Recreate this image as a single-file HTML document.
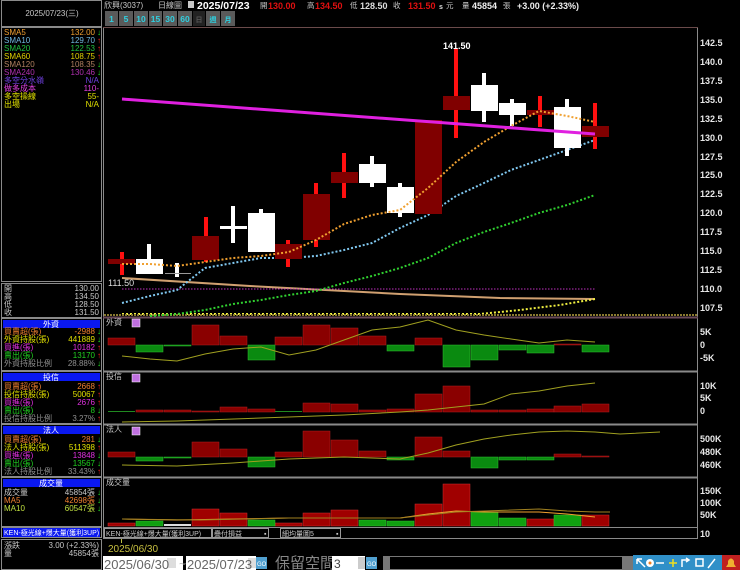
<!DOCTYPE html>
<html><head><meta charset="utf-8"><style>
html,body{margin:0;padding:0;background:#000;width:740px;height:570px;overflow:hidden}
svg{display:block}
text{font-family:"Liberation Sans","Noto Sans CJK TC",sans-serif}
.s{font-size:8px}
.ax{font-size:9px;fill:#e8e8e8;font-weight:bold}
</style></head><body>
<svg width="740" height="570" viewBox="0 0 740 570" xmlns="http://www.w3.org/2000/svg">
<rect width="740" height="570" fill="#000"/>
<!-- left panel frames -->
<g fill="none" stroke="#8a8a8a" stroke-width="1">
<rect x="1.5" y="0.5" width="100" height="26"/>
<rect x="1.5" y="27.5" width="100" height="254"/>
<rect x="1.5" y="283.5" width="100" height="34"/>
<rect x="1.5" y="318.5" width="100" height="52"/>
<rect x="1.5" y="371.5" width="100" height="52"/>
<rect x="1.5" y="424.5" width="100" height="52"/>
<rect x="1.5" y="477.5" width="100" height="49"/>
<rect x="1.5" y="527.5" width="100" height="10"/>
<rect x="1.5" y="539.5" width="100" height="30"/>
</g>
<text x="52" y="16" class="s" fill="#c8c8c8" text-anchor="middle">2025/07/23(三)</text>
<!-- SMA list -->
<g class="s">
<text x="4" y="35" fill="#f0a030">SMA5</text><text x="95" y="35" fill="#f0a030" text-anchor="end">132.00</text><text x="97" y="35" fill="#20e020">↓</text>
<text x="4" y="43" fill="#70b8e0">SMA10</text><text x="95" y="43" fill="#70b8e0" text-anchor="end">129.70</text><text x="97" y="43" fill="#f02020">↑</text>
<text x="4" y="51" fill="#20c040">SMA20</text><text x="95" y="51" fill="#20c040" text-anchor="end">122.53</text><text x="97" y="51" fill="#f02020">↑</text>
<text x="4" y="59" fill="#e0d000">SMA60</text><text x="95" y="59" fill="#e0d000" text-anchor="end">108.75</text><text x="97" y="59" fill="#f02020">↑</text>
<text x="4" y="67" fill="#b08060">SMA120</text><text x="95" y="67" fill="#b08060" text-anchor="end">108.35</text><text x="97" y="67" fill="#20e020">↓</text>
<text x="4" y="75" fill="#b030b0">SMA240</text><text x="95" y="75" fill="#b030b0" text-anchor="end">130.46</text><text x="97" y="75" fill="#20e020">↓</text>
<text x="4" y="83" fill="#7040e0">多空分水嶺</text><text x="99" y="83" fill="#7040e0" text-anchor="end">N/A</text>
<text x="4" y="91" fill="#e040e0">做多成本</text><text x="99" y="91" fill="#e040e0" text-anchor="end">110-</text>
<text x="4" y="99" fill="#e0e000">多空操線</text><text x="99" y="99" fill="#e0e000" text-anchor="end">55-</text>
<text x="4" y="107" fill="#e0e000">出場</text><text x="99" y="107" fill="#e0e000" text-anchor="end">N/A</text>
</g>
<!-- OHLC -->
<g class="s" fill="#c8c8c8">
<text x="4" y="291">開</text><text x="99" y="291" text-anchor="end">130.00</text>
<text x="4" y="299">高</text><text x="99" y="299" text-anchor="end">134.50</text>
<text x="4" y="307">低</text><text x="99" y="307" text-anchor="end">128.50</text>
<text x="4" y="315">收</text><text x="99" y="315" text-anchor="end">131.50</text>
</g>
<!-- 外資 -->
<rect x="3" y="320" width="97" height="8" fill="#0a18f0"/>
<g class="s">
<text x="51" y="327" fill="#fff" text-anchor="middle">外資</text>
<text x="4" y="334" fill="#f08030">買賣超(張)</text><text x="95" y="334" fill="#f08030" text-anchor="end">-2988</text><text x="97" y="334" fill="#20e020">↓</text>
<text x="4" y="342" fill="#e0e000">外資持股(張)</text><text x="95" y="342" fill="#e0e000" text-anchor="end">441889</text><text x="97" y="342" fill="#20e020">↓</text>
<text x="4" y="350" fill="#e030e0">買進(張)</text><text x="95" y="350" fill="#e030e0" text-anchor="end">10182</text><text x="97" y="350" fill="#f02020">↑</text>
<text x="4" y="358" fill="#20d020">賣出(張)</text><text x="95" y="358" fill="#20d020" text-anchor="end">13170</text><text x="97" y="358" fill="#f02020">↑</text>
<text x="4" y="366" fill="#909090">外資持股比例</text><text x="95" y="366" fill="#909090" text-anchor="end">28.88%</text><text x="97" y="366" fill="#20e020">↓</text>
</g>
<rect x="3" y="373" width="97" height="8" fill="#0a18f0"/>
<g class="s">
<text x="51" y="380" fill="#fff" text-anchor="middle">投信</text>
<text x="4" y="389" fill="#f08030">買賣超(張)</text><text x="95" y="389" fill="#f08030" text-anchor="end">2668</text><text x="97" y="389" fill="#f02020">↑</text>
<text x="4" y="397" fill="#e0e000">投信持股(張)</text><text x="95" y="397" fill="#e0e000" text-anchor="end">50067</text><text x="97" y="397" fill="#f02020">↑</text>
<text x="4" y="405" fill="#e030e0">買進(張)</text><text x="95" y="405" fill="#e030e0" text-anchor="end">2676</text><text x="97" y="405" fill="#f02020">↑</text>
<text x="4" y="413" fill="#20d020">賣出(張)</text><text x="95" y="413" fill="#20d020" text-anchor="end">8</text><text x="97" y="413" fill="#20e020">↓</text>
<text x="4" y="421" fill="#909090">投信持股比例</text><text x="95" y="421" fill="#909090" text-anchor="end">3.27%</text><text x="97" y="421" fill="#f02020">↑</text>
</g>
<rect x="3" y="426" width="97" height="8" fill="#0a18f0"/>
<g class="s">
<text x="51" y="433" fill="#fff" text-anchor="middle">法人</text>
<text x="4" y="442" fill="#f08030">買賣超(張)</text><text x="95" y="442" fill="#f08030" text-anchor="end">281</text><text x="97" y="442" fill="#20e020">↓</text>
<text x="4" y="450" fill="#e0e000">法人持股(張)</text><text x="95" y="450" fill="#e0e000" text-anchor="end">511398</text><text x="97" y="450" fill="#f02020">↑</text>
<text x="4" y="458" fill="#e030e0">買進(張)</text><text x="95" y="458" fill="#e030e0" text-anchor="end">13848</text><text x="97" y="458" fill="#20e020">↓</text>
<text x="4" y="466" fill="#20d020">賣出(張)</text><text x="95" y="466" fill="#20d020" text-anchor="end">13567</text><text x="97" y="466" fill="#20e020">↓</text>
<text x="4" y="474" fill="#909090">法人持股比例</text><text x="95" y="474" fill="#909090" text-anchor="end">33.43%</text><text x="97" y="474" fill="#f02020">↑</text>
</g>
<rect x="3" y="479" width="97" height="8" fill="#0a18f0"/>
<g class="s">
<text x="51" y="486" fill="#fff" text-anchor="middle">成交量</text>
<text x="4" y="495" fill="#c8c8c8">成交量</text><text x="95" y="495" fill="#c8c8c8" text-anchor="end">45854張</text><text x="97" y="495" fill="#20e020">↓</text>
<text x="4" y="503" fill="#f08030">MA5</text><text x="95" y="503" fill="#f08030" text-anchor="end">42698張</text><text x="97" y="503" fill="#20e020">↓</text>
<text x="4" y="511" fill="#c0e040">MA10</text><text x="95" y="511" fill="#c0e040" text-anchor="end">60547張</text><text x="97" y="511" fill="#20e020">↓</text>
</g>
<rect x="3" y="528" width="97" height="9" fill="#0a18f0"/>
<text x="4" y="535" font-size="7" fill="#fff">KEN-極光線+爆大量(獲利3UP)</text>
<g class="s" fill="#c8c8c8">
<text x="4" y="548">漲跌</text><text x="99" y="548" text-anchor="end">3.00 (+2.33%)</text>
<text x="4" y="556">量</text><text x="99" y="556" text-anchor="end">45854張</text>
</g>

<!-- header -->
<g font-size="8" fill="#c8c8c8">
<text x="104" y="8">欣興(3037)</text>
<text x="158" y="8">日線圖</text>
</g>
<rect x="188" y="1" width="6" height="7" fill="#c8c8c8"/>
<text x="197" y="9" font-size="10.5" font-weight="bold" fill="#fff">2025/07/23</text>
<g font-size="7.5" fill="#c8c8c8"><text x="260" y="8">開</text><text x="307" y="8">高</text><text x="350" y="8">低</text><text x="393" y="8">收</text><text x="446" y="8">元</text><text x="462" y="8">量</text><text x="503" y="8">張</text></g>
<g font-size="9" font-weight="bold"><text x="268" y="9" fill="#e01010">130.00</text><text x="315" y="9" fill="#e01010">134.50</text><text x="360" y="9" fill="#ddd">128.50</text><text x="408" y="9" fill="#e01010">131.50</text><text x="439" y="9" fill="#ddd" font-size="7">s</text><text x="472" y="9" fill="#eee">45854</text><text x="517" y="9" fill="#eee">+3.00 (+2.33%)</text></g>
<!-- toolbar -->
<g fill="#5a5a5a">
<rect x="105" y="11" width="13" height="15"/><rect x="119" y="11" width="14" height="15"/><rect x="134" y="11" width="14" height="15"/><rect x="149" y="11" width="13" height="15"/><rect x="163" y="11" width="14" height="15"/><rect x="178" y="11" width="14" height="15"/><rect x="193" y="11" width="12" height="15" fill="#222"/><rect x="206" y="11" width="14" height="15"/><rect x="221" y="11" width="14" height="15"/>
</g>
<g font-size="8.5" font-weight="bold" fill="#30d0e0" text-anchor="middle">
<text x="111.5" y="22">1</text><text x="126" y="22">5</text><text x="141" y="22">10</text><text x="155.5" y="22">15</text><text x="170" y="22">30</text><text x="185" y="22">60</text><text x="199" y="22" fill="#555" font-size="7">日</text><text x="213" y="22" font-size="7">週</text><text x="228" y="22" font-size="7">月</text>
</g>

<!-- chart frames -->
<g stroke="#8a8a8a" fill="none" stroke-width="1">
<line x1="103.5" y1="28" x2="103.5" y2="538"/>
<line x1="697.5" y1="27" x2="697.5" y2="538"/>
<line x1="103" y1="27.5" x2="698" y2="27.5" stroke="#6a4a4a"/>
<line x1="103" y1="317.5" x2="698" y2="317.5" stroke="#6a4a5a" stroke-width="2"/>
<line x1="103" y1="371.5" x2="698" y2="371.5" stroke-width="2"/>
<line x1="103" y1="424.5" x2="698" y2="424.5" stroke-width="2"/>
<line x1="103" y1="477.5" x2="698" y2="477.5" stroke-width="2"/>
<line x1="103" y1="527.5" x2="698" y2="527.5"/>
<line x1="103" y1="538.5" x2="698" y2="538.5"/>
</g>
<!-- price axis -->
<g class="ax">
<text x="700" y="46">142.5</text><text x="700" y="65">140.0</text><text x="700" y="84">137.5</text><text x="700" y="103">135.0</text><text x="700" y="122">132.5</text><text x="700" y="141">130.0</text><text x="700" y="160">127.5</text><text x="700" y="178">125.0</text><text x="700" y="197">122.5</text><text x="700" y="216">120.0</text><text x="700" y="235">117.5</text><text x="700" y="254">115.0</text><text x="700" y="273">112.5</text><text x="700" y="292">110.0</text><text x="700" y="311">107.5</text>
<text x="700" y="335">5K</text><text x="700" y="348">0</text><text x="700" y="361">-5K</text>
<text x="700" y="389">10K</text><text x="700" y="401">5K</text><text x="700" y="414">0</text>
<text x="700" y="442">500K</text><text x="700" y="455">480K</text><text x="700" y="468">460K</text>
<text x="700" y="494">150K</text><text x="700" y="506">100K</text><text x="700" y="518">50K</text>
<text x="700" y="537">10</text>
</g>

<!-- MA lines -->
<polyline points="122,278 250,286 400,294 500,298 595,299" fill="none" stroke="#d0a070" stroke-width="2"/>
<line x1="122" y1="289" x2="595" y2="289" stroke="#c030c0" stroke-width="1" stroke-dasharray="1.5,1.5"/>
<polyline points="122,314 480,314 520,310 560,305 595,299" fill="none" stroke="#f0f040" stroke-width="2" stroke-dasharray="2,2"/>
<line x1="104" y1="315" x2="697" y2="315" stroke="#8a7a30" stroke-width="2" stroke-dasharray="2,1"/>
<polyline points="150,316 177,314 205,310 233,304 261,300 289,295 316,291 344,283 372,276 400,268 428,258 456,243 484,232 511,223 539,213 567,205 595,195" fill="none" stroke="#30d030" stroke-width="2" stroke-dasharray="2,2"/>
<polyline points="122,303 150,296 177,290 205,268 233,263 261,258 289,258 316,256 344,250 372,243 400,228 428,215 456,196 484,183 511,170 539,160 567,150 595,140" fill="none" stroke="#80c8f0" stroke-width="2" stroke-dasharray="2,2"/>

<!-- candles -->
<g fill="#ff1010">
<rect x="120" y="252" width="4" height="23"/><rect x="204" y="217" width="4" height="45"/><rect x="286" y="240" width="4" height="27"/><rect x="314" y="183" width="4" height="64"/><rect x="342" y="153" width="4" height="45"/><rect x="454" y="49" width="4" height="89"/><rect x="538" y="96" width="4" height="31"/><rect x="593" y="103" width="4" height="46"/>
</g>
<g fill="#800000">
<rect x="108" y="259" width="27" height="5"/><rect x="192" y="236" width="27" height="24"/><rect x="275" y="244" width="27" height="15"/><rect x="303" y="194" width="27" height="46"/><rect x="331" y="172" width="27" height="11"/><rect x="415" y="120" width="27" height="94"/><rect x="443" y="96" width="27" height="14"/><rect x="527" y="110" width="27" height="5"/><rect x="582" y="126" width="27" height="11"/>
</g>
<g fill="#fff">
<rect x="147" y="244" width="4" height="30"/><rect x="136" y="259" width="27" height="15"/>
<rect x="175" y="263" width="4" height="14"/><rect x="165" y="273" width="26" height="1" fill="#999"/>
<rect x="231" y="206" width="4" height="37"/><rect x="220" y="226" width="27" height="3"/>
<rect x="259" y="209" width="4" height="43"/><rect x="248" y="213" width="27" height="39"/>
<rect x="370" y="156" width="4" height="31"/><rect x="359" y="164" width="27" height="19"/>
<rect x="398" y="183" width="4" height="34"/><rect x="387" y="187" width="27" height="26"/>
<rect x="482" y="73" width="4" height="49"/><rect x="471" y="85" width="27" height="26"/>
<rect x="510" y="99" width="4" height="27"/><rect x="499" y="103" width="27" height="12"/>
<rect x="565" y="99" width="4" height="57"/><rect x="554" y="107" width="27" height="41"/>
</g>
<polyline points="122,264 150,264 177,266 205,262 233,258 261,256 289,252 316,240 344,224 372,215 400,210 428,188 456,162 484,142 511,126 539,111 567,116 595,122" fill="none" stroke="#f0a030" stroke-width="2" stroke-dasharray="2,2"/>
<line x1="122" y1="99" x2="595" y2="134" stroke="#e020e0" stroke-width="3"/>
<text x="108" y="286" font-size="9" fill="#ddd">111.50</text>
<text x="443" y="49" font-size="9" font-weight="bold" fill="#fff">141.50</text>

<!-- lower panel labels -->
<g font-size="8" fill="#c8c8c8"><text x="106" y="325">外資</text><text x="106" y="379">投信</text><text x="106" y="432">法人</text><text x="106" y="485">成交量</text></g>
<g fill="#c070e0" stroke="#fff" stroke-width="0.5"><rect x="132" y="319" width="8" height="8"/><rect x="132" y="374" width="8" height="8"/><rect x="132" y="427" width="8" height="8"/></g>

<!-- 外資 bars -->
<g fill="#8a0000" stroke="#b02020" stroke-width="0.5">
<rect x="108" y="338" width="27" height="7"/><rect x="192" y="325" width="27" height="20"/><rect x="220" y="336" width="27" height="9"/><rect x="275" y="337" width="27" height="8"/><rect x="303" y="325" width="27" height="20"/><rect x="331" y="328" width="27" height="17"/><rect x="359" y="336" width="27" height="9"/><rect x="415" y="338" width="27" height="7"/><rect x="554" y="344" width="27" height="1"/>
</g>
<g fill="#0a8a10" stroke="#30c030" stroke-width="0.5">
<rect x="136" y="345" width="27" height="7"/><rect x="164" y="345" width="27" height="1"/><rect x="248" y="345" width="27" height="15"/><rect x="387" y="345" width="27" height="6"/><rect x="443" y="345" width="27" height="22"/><rect x="471" y="345" width="27" height="15"/><rect x="499" y="345" width="27" height="5"/><rect x="527" y="345" width="27" height="8"/><rect x="582" y="345" width="27" height="7"/>
</g>
<polyline points="122,356 150,359 177,361 205,354 233,349 261,347 289,355 316,350 344,340 372,330 400,327 428,320 456,330 484,335 511,339 539,343 567,340 595,342" fill="none" stroke="#a0a020" stroke-width="1"/>

<!-- 投信 bars -->
<g fill="#8a0000" stroke="#b02020" stroke-width="0.5">
<rect x="136" y="410" width="27" height="2"/><rect x="164" y="410" width="27" height="2"/><rect x="192" y="411" width="27" height="1"/><rect x="220" y="407" width="27" height="5"/><rect x="248" y="409" width="27" height="3"/><rect x="303" y="403" width="27" height="9"/><rect x="331" y="404" width="27" height="8"/><rect x="359" y="410" width="27" height="2"/><rect x="387" y="409" width="27" height="3"/><rect x="415" y="394" width="27" height="18"/><rect x="443" y="386" width="27" height="26"/><rect x="471" y="410" width="27" height="2"/><rect x="499" y="410" width="27" height="2"/><rect x="527" y="409" width="27" height="3"/><rect x="554" y="406" width="27" height="6"/><rect x="582" y="404" width="27" height="8"/>
</g>
<line x1="108" y1="411.5" x2="135" y2="411.5" stroke="#208a20"/><line x1="275" y1="411.5" x2="302" y2="411.5" stroke="#208a20"/>
<polyline points="122,422 177,421 261,418 344,415 400,412 428,410 456,407 484,404 511,394 539,391 567,386 595,383" fill="none" stroke="#a0a020" stroke-width="1"/>

<!-- 法人 bars -->
<g fill="#8a0000" stroke="#b02020" stroke-width="0.5">
<rect x="108" y="452" width="27" height="5"/><rect x="192" y="442" width="27" height="15"/><rect x="220" y="449" width="27" height="8"/><rect x="275" y="452" width="27" height="5"/><rect x="303" y="431" width="27" height="26"/><rect x="331" y="440" width="27" height="17"/><rect x="359" y="451" width="27" height="6"/><rect x="415" y="437" width="27" height="20"/><rect x="443" y="451" width="27" height="6"/><rect x="554" y="454" width="27" height="3"/><rect x="582" y="456" width="27" height="1"/>
</g>
<g fill="#0a8a10" stroke="#30c030" stroke-width="0.5">
<rect x="136" y="457" width="27" height="4"/><rect x="164" y="457" width="27" height="1"/><rect x="248" y="457" width="27" height="10"/><rect x="387" y="457" width="27" height="3"/><rect x="471" y="457" width="27" height="11"/><rect x="499" y="457" width="27" height="3"/><rect x="527" y="457" width="27" height="3"/>
</g>
<polyline points="122,465 177,466 233,463 289,459 344,457 400,459 428,453 456,445 484,439 511,435 539,432 567,431 595,432 620,434 660,432" fill="none" stroke="#a0a020" stroke-width="1"/>

<!-- volume bars -->
<g fill="#a00000" stroke="#d03030" stroke-width="0.5">
<rect x="108" y="523" width="27" height="3"/><rect x="192" y="509" width="27" height="17"/><rect x="220" y="513" width="27" height="13"/><rect x="275" y="523" width="27" height="3"/><rect x="303" y="513" width="27" height="13"/><rect x="331" y="510" width="27" height="16"/><rect x="415" y="504" width="27" height="22"/><rect x="443" y="484" width="27" height="42"/><rect x="527" y="519" width="27" height="7"/><rect x="582" y="515" width="27" height="11"/>
</g>
<g fill="#10a010" stroke="#30c030" stroke-width="0.5">
<rect x="136" y="521" width="27" height="5"/><rect x="248" y="520" width="27" height="6"/><rect x="359" y="520" width="27" height="6"/><rect x="387" y="521" width="27" height="5"/><rect x="471" y="512" width="27" height="14"/><rect x="499" y="518" width="27" height="8"/><rect x="554" y="515" width="27" height="11"/>
</g>
<rect x="164" y="524" width="27" height="2" fill="#ddd"/>
<polyline points="122,519 177,520 233,519 289,518 344,518 400,518 428,514 456,511 484,512 539,512 567,514 595,517" fill="none" stroke="#f0a030" stroke-width="1"/>
<polyline points="122,519 200,520 289,518 400,518 456,512 539,509 567,511 595,512 610,512" fill="none" stroke="#a08020" stroke-width="1"/>

<!-- bottom controls row -->
<g fill="none" stroke="#999" stroke-width="1">
<rect x="104.5" y="528.5" width="107" height="9"/><rect x="212.5" y="528.5" width="56" height="9"/><rect x="280.5" y="528.5" width="60" height="9"/>
</g>
<g font-size="7" fill="#c8c8c8"><text x="106" y="536">KEN-極光線+爆大量(獲利3UP)</text><text x="214" y="536">疊付損益</text><text x="282" y="536">細均量圖5</text><text x="264" y="536">▪</text><text x="336" y="536">▪</text></g>
<line x1="121.5" y1="539" x2="121.5" y2="543" stroke="#c0c040"/>
<text x="108" y="552" font-size="10" fill="#c8c040">2025/06/30</text>
<rect x="103" y="556" width="80" height="14" fill="#fff"/>
<rect x="167" y="558" width="9" height="10" fill="#ddd"/>
<text x="104" y="569" font-size="13" fill="#666">2025/06/30</text>
<text x="179" y="568" font-size="12" fill="#bbb">~</text>
<rect x="186" y="556" width="70" height="14" fill="#fff"/>
<rect x="248" y="558" width="8" height="10" fill="#ddd"/>
<text x="187" y="569" font-size="13" fill="#666">2025/07/23</text>
<rect x="256" y="557" width="11" height="12" fill="#50a0d0"/>
<text x="257" y="566" font-size="6" fill="#fff">GO</text>
<text x="275" y="568" font-size="15" fill="#888" font-family="Noto Sans CJK TC, sans-serif">保留空間</text>
<rect x="332" y="556" width="33" height="14" fill="#fff"/>
<rect x="358" y="557" width="7" height="12" fill="#ccc"/>
<text x="334" y="568" font-size="12" fill="#444">3</text>
<rect x="366" y="557" width="11" height="12" fill="#50a0d0"/>
<text x="367" y="566" font-size="6" fill="#fff">GO</text>
<rect x="383" y="556" width="250" height="14" fill="#777"/>
<rect x="390" y="557" width="232" height="12" fill="#000"/>
<rect x="633" y="555" width="107" height="15" fill="#3090c8"/>
<g stroke="#fff" stroke-width="1.5" fill="none">
<path d="M637 559 L645 567 M637 559 L637 564 M637 559 L642 559"/>
<path d="M656 563 L664 563"/><path d="M669 563 L677 563 M673 559 L673 567" stroke="#f0e020"/>
<path d="M682 567 L682 560 L689 560 M686 558 L689 560 L686 562"/>
<rect x="696" y="559" width="7" height="7"/>
<path d="M708 568 L715 559"/>
</g>
<circle cx="650" cy="563" r="4" fill="#fff"/><circle cx="650" cy="563" r="1.5" fill="#f08020"/>
<rect x="722" y="555" width="18" height="15" fill="#c02020"/>
<path d="M726 567 L736 567 L734 564 L734 561 Q731 556 728 561 L728 564 Z" fill="#f0b030"/>
</svg>
</body></html>
